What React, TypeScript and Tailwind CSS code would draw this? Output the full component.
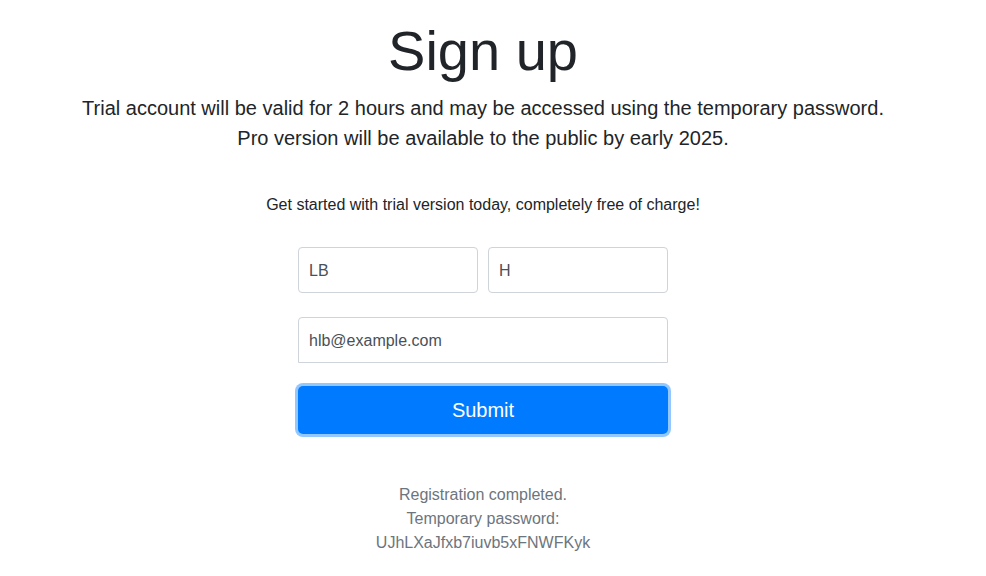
import React from 'react';

export default function App() {
    return (
        <div className="min-h-screen bg-white font-['Liberation_Sans',Arial,sans-serif] text-[#212529]">
            <div className="flex w-[966px] flex-col items-center pt-[17px] text-center">
                {/* Header */}
                <h1 className="text-[56px] leading-[67px] font-normal">Sign up</h1>
                <p className="mt-[9px] text-[20px] leading-[30px]">
                    Trial account will be valid for 2 hours and may be accessed using the temporary password.
                    <br />
                    Pro version will be available to the public by early 2025.
                </p>

                <p className="mt-10 text-[16px] leading-6">
                    Get started with trial version today, completely free of charge!
                </p>

                {/* Form */}
                <form className="mt-[30px] flex w-[370px] flex-col" onSubmit={(e) => e.preventDefault()}>
                    <div className="flex gap-[10px]">
                        <input
                            defaultValue="LB"
                            className="h-[46px] w-[180px] rounded border border-[#ced4da] px-[10px] pt-[2px] text-[16px] text-[#495057] outline-none"
                        />
                        <input
                            defaultValue="H"
                            className="h-[46px] w-[180px] rounded border border-[#ced4da] px-[10px] pt-[2px] text-[16px] text-[#495057] outline-none"
                        />
                    </div>
                    <input
                        defaultValue="hlb@example.com"
                        className="mt-6 h-[46px] w-full rounded-t border border-[#ced4da] px-[10px] pt-[2px] text-[16px] text-[#495057] outline-none"
                    />
                    <button
                        type="submit"
                        className="mt-[23px] h-[48px] w-full rounded-[5px] bg-[#007bff] text-[20px] text-white shadow-[0_0_0_3px_rgba(38,143,255,0.5)]"
                    >
                        Submit
                    </button>
                </form>

                {/* Result */}
                <div className="mt-[49px] text-[16px] leading-6 text-[#6c757d]">
                    <p>Registration completed.</p>
                    <p>Temporary password:</p>
                    <p>UJhLXaJfxb7iuvb5xFNWFKyk</p>
                </div>
            </div>
        </div>
    );
}
